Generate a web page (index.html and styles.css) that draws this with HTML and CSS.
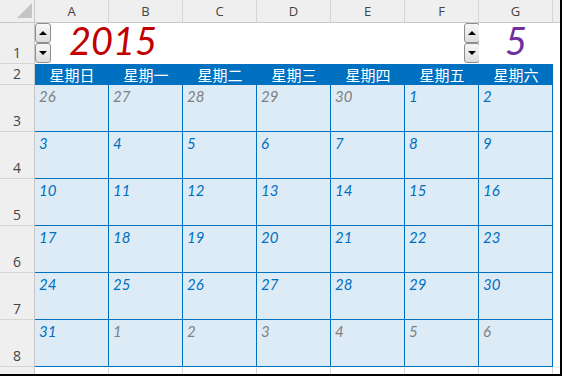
FILE: index.html
```html
<!DOCTYPE html>
<html lang="zh-Hant">
<head>
<meta charset="utf-8">
<title>2015 Calendar</title>
<link rel="stylesheet" href="styles.css">
</head>
<body>
<div class="frame">
  <div class="sheet">
    <div class="corner"><span class="tri"></span></div>
    <div class="ch">A</div><div class="ch">B</div><div class="ch">C</div><div class="ch">D</div><div class="ch">E</div><div class="ch">F</div><div class="ch">G</div><div class="ch ch-end"></div>

    <div class="rh">1</div>
    <div class="top-cell year-cell">
      <div class="spinner spin-left"><span class="btn up"><i></i></span><span class="btn down"><i></i></span></div>
      <span class="year">2015</span>
    </div>
    <div class="top-cell"></div><div class="top-cell"></div><div class="top-cell"></div>
    <div class="top-cell spin-cell">
      <div class="spinner spin-right"><span class="btn up"><i></i></span><span class="btn down"><i></i></span></div>
    </div>
    <div class="top-cell month-cell"><span class="month">5</span></div>
    <div class="top-cell"></div>

    <div class="rh">2</div>
    <div class="wd">星期日</div><div class="wd">星期一</div><div class="wd">星期二</div><div class="wd">星期三</div><div class="wd">星期四</div><div class="wd">星期五</div><div class="wd">星期六</div><div class="blank"></div>

    <div class="rh">3</div>
    <div class="day other">26</div><div class="day other">27</div><div class="day other">28</div><div class="day other">29</div><div class="day other">30</div><div class="day">1</div><div class="day">2</div><div class="blank"></div>

    <div class="rh">4</div>
    <div class="day">3</div><div class="day">4</div><div class="day">5</div><div class="day">6</div><div class="day">7</div><div class="day">8</div><div class="day">9</div><div class="blank"></div>

    <div class="rh">5</div>
    <div class="day">10</div><div class="day">11</div><div class="day">12</div><div class="day">13</div><div class="day">14</div><div class="day">15</div><div class="day">16</div><div class="blank"></div>

    <div class="rh">6</div>
    <div class="day">17</div><div class="day">18</div><div class="day">19</div><div class="day">20</div><div class="day">21</div><div class="day">22</div><div class="day">23</div><div class="blank"></div>

    <div class="rh">7</div>
    <div class="day">24</div><div class="day">25</div><div class="day">26</div><div class="day">27</div><div class="day">28</div><div class="day">29</div><div class="day">30</div><div class="blank"></div>

    <div class="rh">8</div>
    <div class="day">31</div><div class="day other">1</div><div class="day other">2</div><div class="day other">3</div><div class="day other">4</div><div class="day other">5</div><div class="day other">6</div><div class="blank"></div>

    <div class="rh">9</div>
    <div class="gc"></div><div class="gc"></div><div class="gc"></div><div class="gc"></div><div class="gc"></div><div class="gc"></div><div class="gc"></div><div class="blank"></div>
  </div>
</div>
</body>
</html>
```

FILE: styles.css
```css
* { box-sizing: border-box; }
html, body { margin: 0; padding: 0; background: #fff; }

.frame {
  width: 562px;
  height: 376px;
  border-right: 2px solid #000;
  border-bottom: 2px solid #000;
  overflow: hidden;
  background: #fff;
}

.sheet {
  display: grid;
  grid-template-columns: 35px repeat(7, 74px) 1fr;
  grid-template-rows: 23px 41px 21px repeat(6, 47px) 47px;
  font-family: "Open Sans", "Noto Sans", sans-serif;
}

.corner {
  background: #efefef;
  border-right: 1px solid #c8c8c8;
  border-bottom: 1px solid #c8c8c8;
  position: relative;
}
.corner .tri {
  position: absolute;
  right: 2px;
  bottom: 4px;
  width: 0;
  height: 0;
  border-left: 15px solid transparent;
  border-bottom: 15px solid #c4c4c4;
}

.ch {
  background: #efefef;
  border-right: 1px solid #d6d6d6;
  border-bottom: 1px solid #c8c8c8;
  color: #444;
  font-size: 13px;
  display: flex;
  align-items: center;
  justify-content: center;
  padding-bottom: 1px;
}
.ch-end { border-right: none; }

.rh {
  background: #efefef;
  border-right: 1px solid #c8c8c8;
  border-bottom: 1px solid #d6d6d6;
  color: #444;
  font-size: 14px;
  display: flex;
  align-items: flex-end;
  justify-content: center;
  padding-bottom: 1px;
  line-height: 18px;
}

.top-cell {
  background: #fff;
  position: relative;
}
.year-cell {
  grid-column: span 2;
  display: flex;
  align-items: flex-start;
  justify-content: center;
  padding-left: 8px;
}
.year {
  font-family: "Lato", "Open Sans", sans-serif;
  font-style: italic;
  font-size: 38px;
  color: #c00000;
  line-height: 34px;
}
.month-cell {
  display: flex;
  align-items: flex-start;
  justify-content: center;
}
.month {
  font-family: "Lato", "Open Sans", sans-serif;
  font-style: italic;
  font-size: 38px;
  color: #7030a0;
  line-height: 34px;
}

.spinner {
  position: absolute;
  top: 0;
  display: flex;
  flex-direction: column;
  gap: 0;
  width: 16px;
}
.spin-left { left: 0; }
.spin-right { right: -1px; }
.btn {
  display: flex;
  align-items: center;
  justify-content: center;
  height: 20px;
  border: 1px solid #8d8d8d;
  border-radius: 3px;
  background: linear-gradient(#f7f7f7, #dedede);
}
.btn i {
  width: 0;
  height: 0;
  border-left: 4px solid transparent;
  border-right: 4px solid transparent;
}
.btn.up i { border-bottom: 4px solid #000; }
.btn.down i { border-top: 4px solid #000; }

.wd {
  background: #0070c0;
  color: #fff;
  font-family: "Noto Sans CJK TC", "Noto Sans CJK SC", sans-serif;
  font-size: 15px;
  display: flex;
  align-items: center;
  justify-content: center;
  line-height: 1;
}

.day {
  background: #ddebf7;
  border-right: 1px solid #0070c0;
  border-bottom: 1px solid #0070c0;
  font-family: "Lato", "Open Sans", sans-serif;
  font-style: italic;
  font-size: 15px;
  color: #0070c0;
  padding: 2px 0 0 4px;
  line-height: 18px;
}
.day.other { color: #7f7f7f; }

.blank { background: #fff; }

.gc {
  background: #fff;
  border-right: 1px solid #d6d6d6;
}
```
